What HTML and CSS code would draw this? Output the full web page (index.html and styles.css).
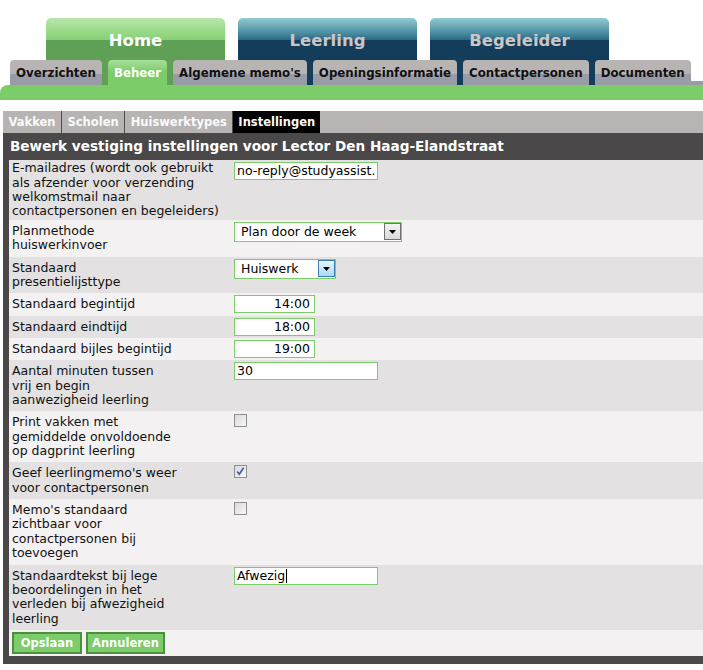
FILE: index.html
```html
<!DOCTYPE html>
<html lang="nl">
<head>
<meta charset="utf-8">
<title>Beheer - Instellingen</title>
<link rel="stylesheet" href="styles.css">
</head>
<body>
<nav class="nav">
  <div class="main-tabs">
    <a class="main-tab main-tab--active">Home</a>
    <a class="main-tab">Leerling</a>
    <a class="main-tab">Begeleider</a>
  </div>
  <div class="sub-tabs">
    <a class="sub-tab">Overzichten</a>
    <a class="sub-tab sub-tab--active">Beheer</a>
    <a class="sub-tab">Algemene memo's</a>
    <a class="sub-tab">Openingsinformatie</a>
    <a class="sub-tab">Contactpersonen</a>
    <a class="sub-tab">Documenten</a>
  </div>
  <div class="green-bar"></div>
</nav>

<section class="panel">
  <div class="panel-tabs">
    <a class="panel-tab">Vakken</a>
    <a class="panel-tab">Scholen</a>
    <a class="panel-tab">Huiswerktypes</a>
    <a class="panel-tab panel-tab--active">Instellingen</a>
  </div>
  <h1 class="panel-title">Bewerk vestiging instellingen voor Lector Den Haag-Elandstraat</h1>
  <div class="form">
    <div class="row row--tight">
      <div class="label">E-mailadres (wordt ook gebruikt<br>als afzender voor verzending<br>welkomstmail naar<br>contactpersonen en begeleiders)</div>
      <div class="value"><div class="field">no-reply@studyassist.</div></div>
    </div>
    <div class="row">
      <div class="label">Planmethode<br>huiswerkinvoer</div>
      <div class="value">
        <div class="select select--wide"><span>Plan door de week</span><span class="select-btn"><svg width="7" height="4" viewBox="0 0 7 4"><polygon points="0,0 7,0 3.5,4" fill="#000"/></svg></span></div>
      </div>
    </div>
    <div class="row">
      <div class="label">Standaard<br>presentielijsttype</div>
      <div class="value">
        <div class="select select--narrow"><span>Huiswerk</span><span class="select-btn select-btn--hover"><svg width="7" height="4" viewBox="0 0 7 4"><polygon points="0,0 7,0 3.5,4" fill="#000"/></svg></span></div>
      </div>
    </div>
    <div class="row">
      <div class="label">Standaard begintijd</div>
      <div class="value"><div class="field field--time">14:00</div></div>
    </div>
    <div class="row">
      <div class="label">Standaard eindtijd</div>
      <div class="value"><div class="field field--time">18:00</div></div>
    </div>
    <div class="row">
      <div class="label">Standaard bijles begintijd</div>
      <div class="value"><div class="field field--time">19:00</div></div>
    </div>
    <div class="row">
      <div class="label">Aantal minuten tussen<br>vrij en begin<br>aanwezigheid leerling</div>
      <div class="value"><div class="field">30</div></div>
    </div>
    <div class="row">
      <div class="label">Print vakken met<br>gemiddelde onvoldoende<br>op dagprint leerling</div>
      <div class="value"><span class="checkbox"></span></div>
    </div>
    <div class="row">
      <div class="label">Geef leerlingmemo's weer<br>voor contactpersonen</div>
      <div class="value"><span class="checkbox"><svg width="11" height="11" viewBox="0 0 11 11"><path d="M2.3 5.6 L4.3 8.2 L8.6 1.8" fill="none" stroke="#4b5c9e" stroke-width="1.7"/></svg></span></div>
    </div>
    <div class="row">
      <div class="label">Memo's standaard<br>zichtbaar voor<br>contactpersonen bij<br>toevoegen</div>
      <div class="value"><span class="checkbox"></span></div>
    </div>
    <div class="row">
      <div class="label">Standaardtekst bij lege<br>beoordelingen in het<br>verleden bij afwezigheid<br>leerling</div>
      <div class="value"><div class="field">Afwezig<span class="caret"></span></div></div>
    </div>
    <div class="row row--actions">
      <button class="btn">Opslaan</button>
      <button class="btn">Annuleren</button>
    </div>
  </div>
</section>
</body>
</html>
```

FILE: styles.css
```css
html, body {
  margin: 0;
  padding: 0;
  background: #fff;
}

body {
  font-family: "DejaVu Sans", Verdana, sans-serif;
  font-size: 12.5px;
  color: #111;
  overflow: hidden;
}

a {
  text-decoration: none;
}

/* ---------- top navigation ---------- */
.main-tabs {
  display: flex;
  gap: 13px;
  padding: 18px 0 0 46px;
}

.main-tab {
  display: block;
  width: 179px;
  height: 67px;
  box-sizing: border-box;
  padding-top: 13px;
  border-radius: 5px 5px 0 0;
  text-align: center;
  font-weight: bold;
  font-size: 16.5px;
  line-height: 20px;
  color: #cbc6c6;
  background: linear-gradient(to bottom, #92cad0 0, #4a8ea0 15px, #2b6784 22px, #143d5c 22px, #143d5c 100%);
}

.main-tab--active {
  color: #fff;
  background: linear-gradient(to bottom, #b7e7aa 0, #86d174 22px, #5f9f56 22px, #5f9f56 100%);
}

.sub-tabs {
  display: flex;
  gap: 6px;
  height: 25px;
  margin: -25px 0 0 10px;
  background: linear-gradient(to bottom, transparent 21px, #999ca6 21px);
}

.sub-tab {
  display: block;
  height: 25px;
  box-sizing: border-box;
  padding: 5px 6px 0;
  border-radius: 4px 4px 0 0;
  font-weight: bold;
  font-size: 11.8px;
  line-height: 16px;
  color: #111;
  background: linear-gradient(to bottom, #b8b4b4 14px, #999ca6 14px);
}

.sub-tab--active {
  color: #fff;
  background: linear-gradient(to bottom, #a8de99 0, #7ccc6a 12px, #7ccc6a 100%);
}

.green-bar {
  height: 15px;
  background: #7ccc6a;
  border-radius: 8px 0 0 0;
}

/* ---------- panel ---------- */
.panel {
  margin: 11px 0 0 3px;
}

.panel-tabs {
  display: flex;
  height: 22px;
  background: #b8b4b4;
}

.panel-tab {
  display: block;
  padding: 0 5.5px;
  border-right: 1px solid #4d4b4b;
  font-weight: bold;
  font-size: 11.5px;
  line-height: 22px;
  color: #fafafa;
}

.panel-tab--active {
  padding: 0 5px;
  border-right: none;
  background: #000;
}

.panel-title {
  margin: 0;
  height: 27px;
  padding-left: 7px;
  background: #4a4848;
  color: #fff;
  font-size: 13.6px;
  font-weight: bold;
  line-height: 27px;
}

.form {
  border-left: 6px solid #4a4848;
  border-bottom: 8px solid #4a4848;
}

.row {
  display: grid;
  grid-template-columns: 222px 1fr;
  background: #f3f1f1;
}

.row:nth-child(odd) {
  background: #e3e1e1;
}

.label {
  align-self: center;
  padding: 4px 3px;
  line-height: 14.35px;
  color: #111;
}

.row--tight .label {
  padding: 1.3px 3px;
}

.value {
  padding: 2px 3px;
}

/* ---------- form controls ---------- */
.field {
  width: 144px;
  height: 18px;
  box-sizing: border-box;
  padding: 0 2px;
  border: 1px solid #7dcc6a;
  background: #fff;
  color: #000;
  line-height: 16px;
  white-space: nowrap;
  overflow: hidden;
}

.field--time {
  width: 81px;
  padding-right: 4px;
  text-align: right;
}

.caret {
  display: inline-block;
  width: 1px;
  height: 14px;
  margin-left: 1px;
  background: #000;
  vertical-align: -3px;
}

.select {
  display: flex;
  align-items: center;
  justify-content: space-between;
  height: 20px;
  box-sizing: border-box;
  padding: 0 0 0 6px;
  border: 1px solid #7dcc6a;
  background: #fff;
  color: #000;
  line-height: 16px;
}

.select--wide {
  width: 168px;
}

.select--narrow {
  width: 102px;
}

.select-btn {
  display: flex;
  align-items: center;
  justify-content: center;
  width: 17px;
  height: 17px;
  box-sizing: border-box;
  border: 1px solid #707070;
  background: linear-gradient(to bottom, #f3f3f3, #dadada);
}

.select-btn--hover {
  border-color: #3c7fb1;
  background: linear-gradient(to bottom, #e8f5fd, #a9d9f4);
}

.checkbox {
  display: flex;
  align-items: center;
  justify-content: center;
  width: 13px;
  height: 13px;
  box-sizing: border-box;
  margin-top: 1px;
  border: 1px solid #8e8f8f;
  background: linear-gradient(135deg, #d9d9d9, #f9f9f9);
}

.row--actions {
  display: flex;
  gap: 4px;
  padding: 2px 3px;
}

.btn {
  min-width: 70px;
  height: 22px;
  box-sizing: border-box;
  padding: 0 4px;
  border: 2px solid #4b8f3f;
  background: #7ccc6a;
  color: #fff;
  font-family: "DejaVu Sans", Verdana, sans-serif;
  font-weight: bold;
  font-size: 11.5px;
  line-height: 18px;
}
```
